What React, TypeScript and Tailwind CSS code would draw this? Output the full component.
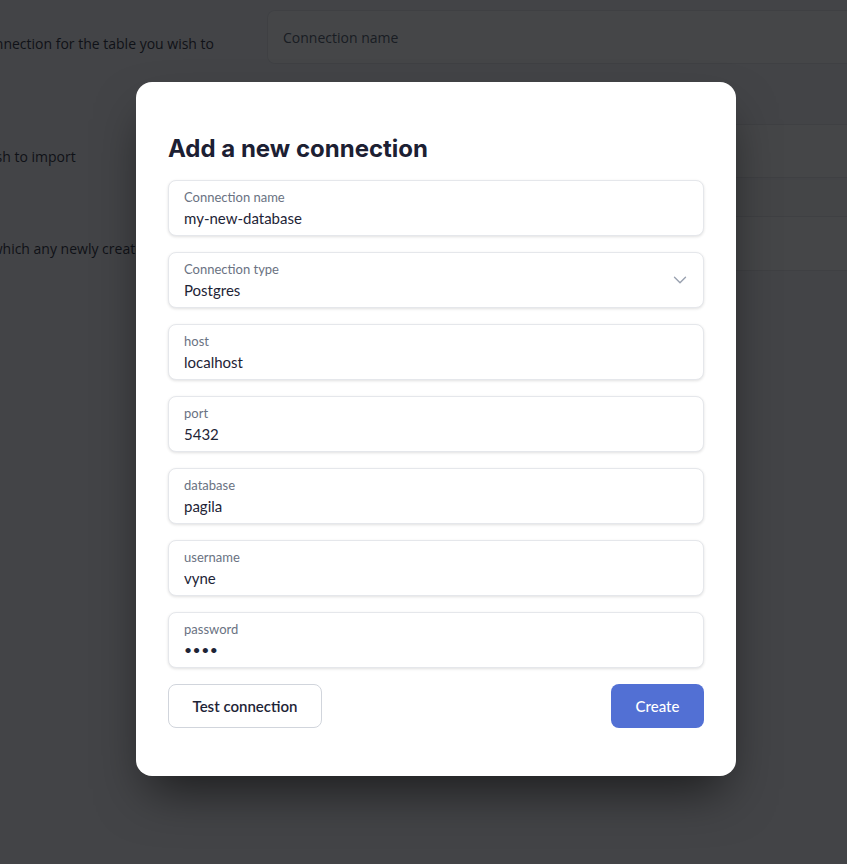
import { ChevronDown } from "lucide-react";

const fields = [
  { label: "Connection name", value: "my-new-database" },
  { label: "Connection type", value: "Postgres", select: true },
  { label: "host", value: "localhost" },
  { label: "port", value: "5432" },
  { label: "database", value: "pagila" },
  { label: "username", value: "vyne" },
  { label: "password", value: "••••", secret: true },
];

function Field({
  label,
  value,
  select,
  secret,
}: {
  label: string;
  value: string;
  select?: boolean;
  secret?: boolean;
}) {
  return (
    <div className="relative h-[56px] rounded-lg border border-gray-200 bg-white px-[15px] pt-[8px] shadow-[0_1px_3px_rgba(0,0,0,0.12)]">
      <div className="text-[13px] leading-4 text-gray-500">{label}</div>
      <div
        className={`mt-[3px] leading-5 text-[#1e2436] ${
          secret ? "text-[14px] tracking-[0.5px]" : "text-[15px]"
        }`}
      >
        {value}
      </div>
      {select && (
        <ChevronDown
          className="absolute right-[12px] top-[16px] text-gray-400"
          size={22}
          strokeWidth={1.5}
        />
      )}
    </div>
  );
}

export default function App() {
  return (
    <div
      className="relative h-[864px] overflow-hidden bg-[#f7f7f8]"
      style={{ fontFamily: "'Open Sans', 'Liberation Sans', sans-serif" }}
    >
      {/* page behind the dialog */}
      <div className="flex pt-[10px]">
        <div className="w-[267px] shrink-0 overflow-hidden text-[14px] text-[#1f2937]">
          <p className="-ml-[74px] mt-[23px] whitespace-nowrap">
            Select a connection for the table you wish to
          </p>
          <p className="-ml-[168px] mt-[92px] whitespace-nowrap">
            Select the schema you wish to import
          </p>
          <p className="-ml-[140px] mt-[71px] whitespace-nowrap">
            Choose the schema which any newly created types will be added to
          </p>
        </div>
        <div className="flex-1">
          <div className="flex h-[54px] items-center rounded-l-lg border border-r-0 border-gray-200 bg-white pl-[15px] text-[14px] text-gray-600">
            Connection name
          </div>
          <div className="mt-[60px] h-[54px] border-y border-gray-200 bg-white" />
          <div className="mt-[2px] h-[37px] border-b border-gray-200 bg-[#fafafa]" />
          <div className="h-[54px] border-b border-gray-200 bg-white" />
        </div>
      </div>

      {/* overlay */}
      <div className="absolute inset-0 bg-[#0b0c0e]/[0.76]" />

      {/* dialog */}
      <div className="absolute left-[136px] top-[82px] w-[600px] rounded-2xl bg-white px-8 pb-12 pt-[51px] shadow-[0_25px_50px_-12px_rgba(0,0,0,0.6)]">
        <h2
          className="text-[24px] font-bold leading-8 text-[#1c2033]"
          style={{ fontFamily: "Inter, 'Liberation Sans', sans-serif" }}
        >
          Add a new connection
        </h2>
        <div
          className="mt-[15px] flex flex-col gap-4"
          style={{ fontFamily: "Lato, 'Open Sans', sans-serif" }}
        >
          {fields.map((f) => (
            <Field key={f.label} {...f} />
          ))}
        </div>
        <div
          className="mt-4 flex items-center justify-between"
          style={{ fontFamily: "Lato, 'Open Sans', sans-serif" }}
        >
          <button className="h-[44px] w-[154px] rounded-lg border border-gray-300 bg-white text-[15px] font-semibold text-[#1e2436]">
            Test connection
          </button>
          <button className="h-[44px] w-[93px] rounded-lg bg-[#5270d4] text-[15px] font-medium text-white">
            Create
          </button>
        </div>
      </div>
    </div>
  );
}
